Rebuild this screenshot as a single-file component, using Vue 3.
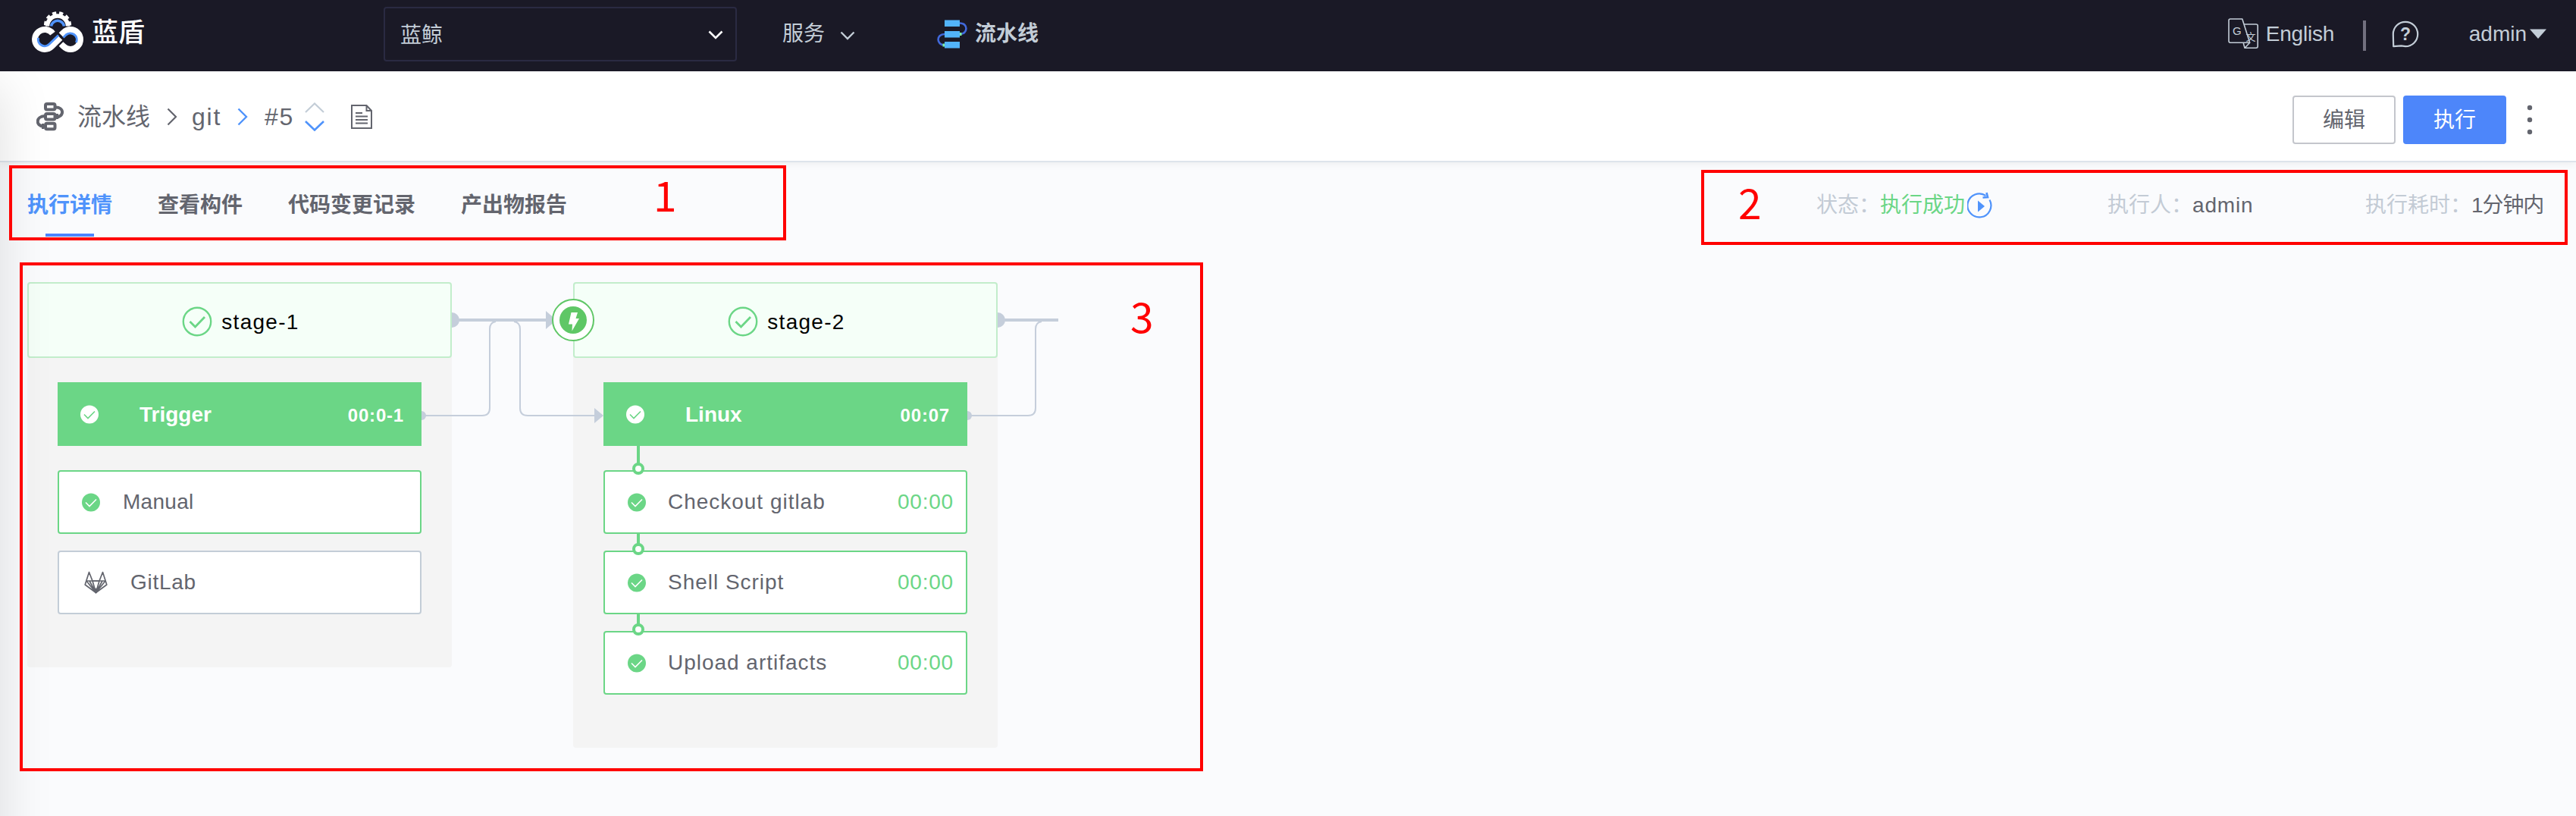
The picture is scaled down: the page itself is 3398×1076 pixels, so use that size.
<script setup>
const tabs = ['执行详情', '查看构件', '代码变更记录', '产出物报告']
const details = [
  { label: '状态：', value: '执行成功', status: true },
  { label: '执行人：', value: 'admin' },
  { label: '执行耗时：', value: '1分钟内' },
]
const stages = [
  {
    name: 'stage-1',
    job: { name: 'Trigger', time: '00:0-1' },
    steps: [
      { name: 'Manual', done: true },
      { name: 'GitLab', done: false },
    ],
  },
  {
    name: 'stage-2',
    linked: true,
    job: { name: 'Linux', time: '00:07' },
    steps: [
      { name: 'Checkout gitlab', done: true, time: '00:00' },
      { name: 'Shell Script', done: true, time: '00:00' },
      { name: 'Upload artifacts', done: true, time: '00:00' },
    ],
  },
]
</script>

<template>
  <div class="page">
    <header class="topbar">
      <div class="brand">
        <svg width="68" height="54" viewBox="0 0 68 54" fill="none">
          <path d="M20.5 19.5 A13.5 13.5 0 1 1 47.5 19.5" stroke="#fff" stroke-width="5.5" />
          <path d="M18.3 20 A15.8 15.8 0 1 1 49.7 20" stroke="#fff" stroke-width="4.6" stroke-dasharray="5 3.9" stroke-dashoffset="-1.8" />
          <path d="M25.5 19.5 A8.6 8.6 0 0 1 42.5 19.5" stroke="#4f93fb" stroke-width="3.6" />
          <path d="M27.5 29.2 A13 13 0 1 0 26.2 46.2 L37.5 35" stroke="#fff" stroke-width="8" />
          <path d="M8.6 35 A8.6 8.6 0 0 0 23.2 43 L35 31.5" stroke="#4f93fb" stroke-width="3" />
          <path d="M38.5 31 L41.8 27.8 A13 13 0 1 1 41.8 46.2 L38.5 43" stroke="#fff" stroke-width="8" />
          <path d="M41.5 34.5 L45 31 A8.6 8.6 0 0 1 58.5 41" stroke="#4f93fb" stroke-width="3" />
        </svg>
        <span>蓝盾</span>
      </div>
      <div class="project">
        <span>蓝鲸</span>
        <svg width="20" height="12" viewBox="0 0 20 12"><path d="M1.5 1.5 L10 10 L18.5 1.5" fill="none" stroke="#fff" stroke-width="2.6" /></svg>
      </div>
      <div class="service">
        <span>服务</span>
        <svg width="20" height="12" viewBox="0 0 20 12"><path d="M1.5 1.5 L10 10 L18.5 1.5" fill="none" stroke="#c3cdd7" stroke-width="2.4" /></svg>
      </div>
      <div class="module">
        <svg width="40" height="38" viewBox="0 0 40 38">
          <g fill="none" stroke="#4169dc" stroke-width="2.6">
            <path d="M30 4.5 C41.5 4.5 41 19 30 19" />
            <path d="M10 19 C-1.5 19 -1 33.5 10 33.5" />
          </g>
          <path d="M30 17h2.5v4H30zM7.5 31.5H10v4H7.5z" fill="#7df0a0" />
          <path d="M10 .5h20v8.5H10zM10 15h20v8.5H10zM10 29h20v8.5H10z" fill="#52b4fa" />
        </svg>
        <strong>流水线</strong>
      </div>
      <div class="account">
        <svg width="41" height="41" viewBox="0 0 41 41" fill="none" stroke="#c3cdd7" stroke-width="1.6" stroke-linejoin="round">
          <path d="M3 1 H18.8 L28.7 32.2 H3 Q1 32.2 1 30 V3 Q1 1 3 1 Z" />
          <path d="M21 8 H37 Q39.2 8 39.2 10 V37 Q39.2 39.2 37 39.2 H22 L20.3 33 M22 39.2 L28.7 32.2" />
          <text x="6" y="21.5" class="glyph-g">G</text>
          <text x="23.5" y="29" class="glyph-wen">文</text>
        </svg>
        <span class="lang">English</span>
        <i class="divider"></i>
        <svg class="help" width="36" height="36" viewBox="0 0 36 36">
          <path d="M2.2 34.2 L1.8 18 A16.2 16.2 0 1 1 18 34.2 L12.5 33.4 Z" fill="none" stroke="#c3cdd7" stroke-width="2.2" stroke-linejoin="round" />
          <text x="18" y="26" class="glyph-q">?</text>
        </svg>
        <span class="user">admin</span>
        <svg class="caret" width="22" height="13" viewBox="0 0 22 13"><path d="M0 .5H22L11 13Z" fill="#c3cdd7" /></svg>
      </div>
    </header>

    <main class="content">
      <section class="crumbs">
        <svg width="36" height="38" viewBox="0 0 36 38" fill="none" stroke="#63656e" stroke-width="4">
          <rect x="12" y="2" width="12.5" height="7.5" rx="2" />
          <rect x="12" y="15" width="12.5" height="7.5" rx="2" />
          <rect x="12" y="27.8" width="12.5" height="7.5" rx="2" />
          <path d="M25 6.5 C37 6 37 19 26 19.5" />
          <path d="M11 18 C-1 18.5 -1 31 9 31.5" />
          <path d="M27.5 15 v7 M8.5 28 v7" stroke-width="3" />
        </svg>
        <span class="root">流水线</span>
        <svg width="14" height="24" viewBox="0 0 14 24"><path d="M1.5 1.5 L12 12 L1.5 22.5" fill="none" stroke="#63656e" stroke-width="2.2" /></svg>
        <span class="pipe">git</span>
        <svg width="14" height="24" viewBox="0 0 14 24"><path d="M1.5 1.5 L12 12 L1.5 22.5" fill="none" stroke="#4f93fb" stroke-width="2.4" /></svg>
        <span class="build">#5</span>
        <svg class="updown" width="26" height="38" viewBox="0 0 26 38" fill="none" stroke-width="2.2">
          <path d="M1 13 L13 1.5 L25 13" stroke="#c3cdd7" />
          <path d="M1 25 L13 36.5 L25 25" stroke="#4f93fb" stroke-width="2.6" />
        </svg>
        <svg class="doc" width="28" height="32" viewBox="0 0 28 32" fill="none" stroke="#63656e" stroke-width="2">
          <path d="M1 1 H20.5 L27 8 V31 H1 Z M20.5 1 V8 H27" />
          <path d="M6 11 h9 M6 15.5 h16 M6 20 h16 M6 24.5 h16" />
        </svg>
        <div class="actions">
          <button class="btn">编辑</button>
          <button class="btn primary">执行</button>
          <svg width="8" height="40" viewBox="0 0 8 40" fill="#63656e"><circle cx="4" cy="4" r="3.2" /><circle cx="4" cy="20" r="3.2" /><circle cx="4" cy="36" r="3.2" /></svg>
        </div>
      </section>

      <section class="tabbar">
        <nav class="tabs">
          <a v-for="(tab, i) in tabs" :key="tab" :class="{ active: i === 0 }">{{ tab }}</a>
        </nav>
        <dl class="details">
          <div v-for="item in details" :key="item.label" class="detail">
            <dt>{{ item.label }}</dt>
            <dd :class="{ ok: item.status, latin: item.value === 'admin' }">{{ item.value }}</dd>
            <svg v-if="item.status" width="34" height="36" viewBox="0 0 34 36">
              <path d="M24.5 5 A15.5 15.5 0 1 0 29.5 10.5" fill="none" stroke="#4f93fb" stroke-width="2.2" />
              <path d="M25.5 1 L27 7 L20.5 7.5" fill="none" stroke="#4f93fb" stroke-width="2.6" />
              <path d="M14 11.5 L23 19 L14 26.5Z" fill="#4f93fb" />
            </svg>
          </div>
        </dl>
      </section>

      <section class="pipeline">
        <article v-for="stage in stages" :key="stage.name" class="stage">
          <div class="stage-head">
            <svg width="40" height="40" viewBox="0 0 40 40" fill="none" stroke="#6bd686">
              <circle cx="20" cy="20" r="18.2" stroke-width="2.4" />
              <path d="M10.5 20 L17.5 27 L30 14" stroke-width="2.8" />
            </svg>
            <span>{{ stage.name }}</span>
          </div>
          <div class="jobs">
            <div class="job">
              <svg width="24" height="25" viewBox="0 0 24 25"><circle cx="12" cy="12.5" r="12" fill="#fff" /><path d="M5 12.5 L10 17.5 L19 8.5" fill="none" stroke="#6bd686" stroke-width="1.6" /></svg>
              <b>{{ stage.job.name }}</b>
              <time>{{ stage.job.time }}</time>
            </div>
            <div v-for="step in stage.steps" :key="step.name" class="step" :class="{ done: step.done, chained: stage.linked }">
              <svg v-if="step.done" width="24" height="25" viewBox="0 0 24 25"><circle cx="12" cy="12.5" r="12" fill="#6bd686" /><path d="M5 12.5 L10 17.5 L19 8.5" fill="none" stroke="#fff" stroke-width="1.6" /></svg>
              <svg v-else class="fox" width="31" height="30" viewBox="0 0 31 30" fill="none" stroke="#63656e" stroke-width="1.7" stroke-linejoin="round">
                <path d="M6.5 1.5 L1.2 18 L15.5 28.5 L29.8 18 L24.5 1.5 L20 13 H11 Z" />
                <path d="M3 13 H28 M3 13 L15.5 28.5 L28 13 M11 13 L15.5 28.5 L20 13 M7 13 L15.5 28.5 L24 13" />
                <path d="M11.5 23.5 H19.5 L15.5 28.5Z" fill="#63656e" />
              </svg>
              <span>{{ step.name }}</span>
              <time v-if="step.time">{{ step.time }}</time>
            </div>
          </div>

          <!-- connectors leaving the stage and its job -->
          <svg class="wire-out" width="130" height="166" viewBox="0 0 130 166" fill="none" stroke="#c5cedb">
            <path d="M0 30 A10 10 0 0 1 0 50Z" fill="#c5cedb" stroke="none" />
            <path :d="stage.linked ? 'M0 40 H80' : 'M0 40 H126'" stroke-width="4" />
            <path d="M58 42 Q50 43 50 52 V156" stroke-width="2" />
          </svg>
          <svg class="wire-job" width="100" height="20" viewBox="0 0 100 20" fill="none" stroke="#c5cedb" stroke-width="2">
            <path d="M0 4 A6 6 0 0 1 0 16Z" fill="#c5cedb" stroke="none" />
            <path d="M0 10 H80 Q90 10 90 0" />
          </svg>
          <template v-if="stage.linked">
            <svg class="wire-in" width="112" height="160" viewBox="0 0 112 160" fill="none" stroke="#c5cedb">
              <path d="M-7 14 Q1 15 1 24 V128 Q1 138 11 138 H100" stroke-width="2" />
              <path d="M99 128 L111 138 L99 148Z" fill="#c5cedb" stroke="none" />
              <path d="M35 0 L49 12 L35 24Z" fill="#c5cedb" stroke="none" />
            </svg>
            <span class="bolt">
              <svg width="36" height="36" viewBox="0 0 36 36"><circle cx="18" cy="18" r="18" fill="#5fc766" /><path d="M15.5 8 H24 L21.5 16 H26 L16.5 32.5 L17 23.5 H12Z" fill="#fff" /></svg>
            </span>
          </template>
        </article>
      </section>
    </main>

    <div class="mark mark-tabs"><span>1</span></div>
    <div class="mark mark-details"><span>2</span></div>
    <div class="mark mark-pipeline"><span>3</span></div>
  </div>
</template>

<style>
body {
  margin: 0;
}
</style>

<style scoped>
*,
*::before,
*::after {
  box-sizing: border-box;
}
.page {
  position: relative;
  width: 3398px;
  height: 1076px;
  overflow: hidden;
  background: #fafbfd;
  color: #63656e;
  font: 28px/40px 'Liberation Sans', 'Noto Sans CJK SC', sans-serif;
  white-space: nowrap;
}
svg {
  display: block;
  flex: none;
}
.topbar {
  display: flex;
  align-items: center;
  height: 94px;
  padding: 0 39px 5px 42px;
  background: #1a1926;
  color: #c3cdd7;
}
.brand {
  display: flex;
  align-items: center;
  gap: 11px;
  width: 464px;
  padding-bottom: 5px;
  color: #fff;
  font-size: 35px;
  font-weight: 500;
}
.brand span {
  padding-top: 2px;
}
.project {
  display: flex;
  align-items: center;
  justify-content: space-between;
  width: 466px;
  height: 72px;
  padding: 3px 16px 0 20px;
  border: 2px solid #2a2a42;
  border-radius: 4px;
}
.project span {
  padding-top: 2px;
}
.service {
  display: flex;
  align-items: center;
  gap: 20px;
  width: 204px;
  margin-left: 60px;
}
.service span,
.module strong {
  padding-top: 1px;
}
.service svg {
  margin-top: 4px;
}
.module {
  display: flex;
  align-items: center;
  gap: 10px;
}
.account {
  display: flex;
  align-items: center;
  margin-left: auto;
}
.lang {
  width: 128px;
  margin-left: 9px;
  letter-spacing: -0.2px;
}
.divider {
  width: 4px;
  height: 40px;
  margin-top: 4px;
  background: #72707f;
}
.help {
  margin-left: 34px;
}
.user {
  margin-left: 66px;
}
.caret {
  margin-left: 4px;
}
.glyph-g,
.glyph-wen,
.glyph-q {
  fill: #c3cdd7;
  stroke: none;
  font-family: 'Liberation Sans', sans-serif;
  font-size: 15px;
}
.glyph-wen {
  font-family: 'Noto Sans CJK SC', sans-serif;
  font-size: 13px;
}
.glyph-q {
  font-size: 23px;
  font-weight: 700;
  text-anchor: middle;
}
.content {
  position: relative;
  height: 982px;
  overflow: hidden;
}
/* soft edge cast by the collapsed side panel */
.content::before {
  position: absolute;
  z-index: 3;
  top: 20px;
  left: -200px;
  width: 200px;
  height: 1100px;
  box-shadow: 0 0 70px rgba(0, 0, 0, 0.13);
  content: '';
}
.crumbs {
  position: relative;
  z-index: 1;
  display: flex;
  align-items: center;
  height: 120px;
  padding: 1px 57px 0 48px;
  border-bottom: 2px solid #dde4eb;
  background: #fff;
  box-shadow: 0 2px 10px rgba(0, 0, 0, 0.06);
  font-size: 32px;
}
.root {
  margin: 0 22px 0 18px;
}
.pipe {
  width: 60px;
  margin-left: 19px;
  letter-spacing: 1.8px;
}
.build {
  width: 37px;
  margin-left: 22px;
  letter-spacing: 1.6px;
}
.updown {
  margin-left: 16px;
}
.doc {
  margin-left: 35px;
}
.actions {
  display: flex;
  align-items: center;
  gap: 10px;
  margin-left: auto;
  padding-top: 8px;
}
.btn {
  width: 136px;
  height: 64px;
  padding: 2px 0 0;
  border: 2px solid #c4c6cc;
  border-radius: 4px;
  background: #fff;
  color: #63656e;
  font: inherit;
  font-size: 28px;
}
.btn.primary {
  border-color: #4d86fa;
  background: #4d86fa;
  color: #fff;
}
.actions svg {
  margin-left: 17px;
}
.tabbar {
  display: flex;
  align-items: center;
  justify-content: space-between;
  height: 112px;
  padding: 0 38px 0 36px;
}
.tabs {
  display: flex;
  gap: 60px;
  padding-top: 2px;
  font-weight: 700;
}
.tabs a {
  position: relative;
}
.tabs .active {
  color: #4f93fb;
}
.tabs .active::after {
  position: absolute;
  bottom: -21px;
  left: 24px;
  width: 64px;
  height: 4px;
  background: #4c84ff;
  content: '';
}
.details {
  display: flex;
  margin: 0;
}
.detail {
  display: flex;
  align-items: center;
  height: 40px;
}
.detail:nth-child(1) {
  width: 384px;
}
.detail:nth-child(2) {
  width: 340px;
}
.detail:nth-child(3) {
  width: 240px;
}
.detail dt {
  padding-top: 2px;
  color: #c3cbd5;
}
.detail dd {
  margin: 0;
  padding-top: 2px;
}
.detail .ok {
  color: #6bd686;
}
.detail .latin {
  letter-spacing: 0.8px;
}
.detail:nth-child(3) dd {
  letter-spacing: -1.1px;
}
.detail svg {
  margin: 1px 0 0 3px;
}
.pipeline {
  display: flex;
  align-items: flex-start;
  gap: 160px;
  padding: 46px 0 0 36px;
}
.stage {
  position: relative;
  width: 560px;
  border-radius: 4px;
  background: #f4f4f4;
}
.stage-head {
  display: flex;
  align-items: center;
  justify-content: center;
  gap: 12px;
  height: 100px;
  padding: 3px 0 0 3px;
  border: 2px solid #c2edcb;
  border-radius: 4px;
  background: #f5fff8;
  color: #000;
  letter-spacing: 1.3px;
}
.stage-head span {
  padding-top: 2px;
}
.jobs {
  display: flex;
  flex-direction: column;
  gap: 22px;
  padding: 32px 40px 70px;
}
.job {
  display: flex;
  align-items: center;
  height: 84px;
  margin-bottom: 10px;
  padding: 0 23px 0 30px;
  background: #6bd686;
  color: #fff;
}
.job b {
  margin: 1px 0 0 54px;
}
.job time {
  margin: 3px 0 0 auto;
  font-size: 24px;
  font-weight: 700;
  letter-spacing: 0.8px;
}
.step {
  position: relative;
  display: flex;
  align-items: center;
  height: 84px;
  padding: 0 16px 0 30px;
  border: 2px solid #c3cdd7;
  border-radius: 4px;
  background: #fff;
}
.step.done {
  border-color: #6bd686;
}
.step span {
  margin: 0 0 0 30px;
  letter-spacing: 0.3px;
}
.step.chained span {
  margin-left: 29px;
  letter-spacing: 0.98px;
}
.step .fox + span {
  letter-spacing: 0.7px;
}
.step .fox {
  margin-left: 3px;
}
.step time {
  margin: 0 0 0 auto;
  color: #6bd686;
  letter-spacing: 0.8px;
}
.chained::before {
  position: absolute;
  top: -24px;
  left: 42px;
  width: 4px;
  height: 18px;
  background: #6bd686;
  content: '';
}
.job + .chained::before {
  top: -34px;
  height: 28px;
}
.chained::after {
  position: absolute;
  top: -12px;
  left: 36px;
  width: 16px;
  height: 16px;
  border: 4px solid #6bd686;
  border-radius: 50%;
  background: #fff;
  content: '';
}
.wire-out {
  position: absolute;
  top: 10px;
  left: 560px;
}
.wire-job {
  position: absolute;
  top: 166px;
  left: 520px;
}
.wire-in {
  position: absolute;
  top: 38px;
  left: -71px;
  overflow: visible;
}
.bolt {
  position: absolute;
  top: 22px;
  left: -28px;
  display: flex;
  align-items: center;
  justify-content: center;
  width: 56px;
  height: 56px;
  border: 2px solid #5fc766;
  border-radius: 50%;
  background: #fff;
}
.mark {
  position: absolute;
  z-index: 5;
  border: 4px solid #f00;
  color: #f00;
  font: 400 55px/56px 'Noto Sans CJK SC', sans-serif;
}
.mark span {
  position: absolute;
}
.mark-tabs {
  top: 218px;
  left: 12px;
  width: 1025px;
  height: 99px;
}
.mark-tabs span {
  top: 5px;
  left: 846px;
}
.mark-details {
  top: 224px;
  left: 2244px;
  width: 1143px;
  height: 99px;
}
.mark-details span {
  top: 9px;
  left: 45px;
}
.mark-pipeline {
  top: 346px;
  left: 26px;
  width: 1561px;
  height: 671px;
}
.mark-pipeline span {
  top: 37px;
  left: 1461px;
}
</style>
